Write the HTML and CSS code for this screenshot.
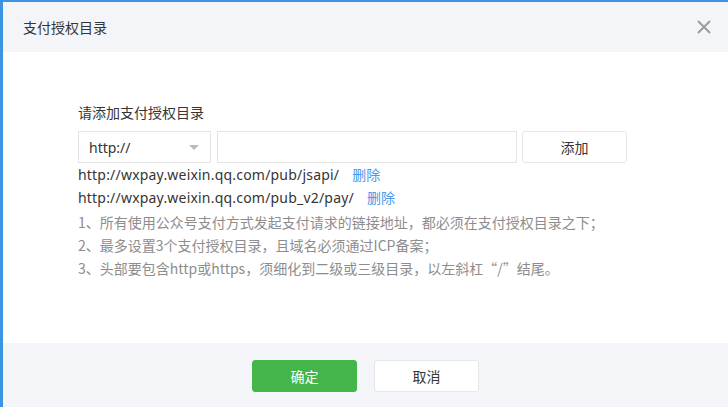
FILE: index.html
```html
<!DOCTYPE html>
<html lang="zh-CN">
  <head>
    <meta charset="UTF-8" />
    <title>支付授权目录</title>
    <link rel="stylesheet" href="styles.css">
  </head>
  <body>
    <div class="dialog">
      <div class="dialog-hd">
        <h3 class="dialog-title">支付授权目录</h3>
        <a class="dialog-close" href="javascript:;">
          <svg width="14" height="14" viewBox="0 0 14 14">
            <path d="M1 1L13 13M13 1L1 13" stroke="#999" stroke-width="1.8" fill="none" />
          </svg>
        </a>
      </div>

      <div class="dialog-bd">
        <p class="form-label">请添加支付授权目录</p>
        <div class="form-row">
          <div class="select">
            <span>http://</span>
            <i class="arrow"></i>
          </div>
          <input class="form-input" type="text" />
          <button class="btn btn-default btn-add">添加</button>
        </div>

        <ul class="dir-list">
          <li>http://wxpay.weixin.qq.com/pub/jsapi/<a class="link" href="javascript:;">删除</a></li>
          <li>http://wxpay.weixin.qq.com/pub_v2/pay/<a class="link" href="javascript:;">删除</a></li>
        </ul>

        <ul class="tips">
          <li>1、所有使用公众号支付方式发起支付请求的链接地址，都必须在支付授权目录之下；</li>
          <li>2、最多设置3个支付授权目录，且域名必须通过ICP备案；</li>
          <li>3、头部要包含http或https，须细化到二级或三级目录，以左斜杠“/”结尾。</li>
        </ul>
      </div>

      <div class="dialog-ft">
        <button class="btn btn-primary">确定</button>
        <button class="btn btn-default">取消</button>
      </div>
    </div>
  </body>
</html>
```

FILE: styles.css
```css
body {
  margin: 0;
  padding: 0;
  background: #fff;
  font-family: "Noto Sans", "Noto Sans CJK SC", sans-serif;
  font-size: 14px;
  color: #353535;
}

.dialog {
  width: 728px;
  height: 407px;
  box-sizing: border-box;
  border-top: 2px solid #3c95e2;
  border-left: 3px solid #3c95e2;
  display: flex;
  flex-direction: column;
}

.dialog-hd {
  height: 50px;
  flex-shrink: 0;
  background-color: #f4f5f9;
  display: flex;
  align-items: center;
  justify-content: space-between;
  padding: 0 17px 0 20px;
}

.dialog-title {
  margin: 0;
  font-size: 14px;
  font-weight: normal;
  color: #353535;
}

.dialog-close {
  display: flex;
  width: 14px;
  height: 14px;
}

.dialog-bd {
  flex: 1;
  padding: 51px 0 0 75px;
}

.form-label {
  margin: 0 0 8px;
  line-height: 20px;
}

.form-row {
  display: flex;
  height: 32px;
}

.select {
  width: 133px;
  box-sizing: border-box;
  border: 1px solid #e4e4e4;
  display: flex;
  align-items: center;
  justify-content: space-between;
  padding: 0 10px 0 10px;
  color: #353535;
}

.arrow {
  width: 0;
  height: 0;
  border-left: 5px solid transparent;
  border-right: 5px solid transparent;
  border-top: 5px solid #bbb;
  margin-right: 1px;
}

.form-input {
  width: 300px;
  box-sizing: border-box;
  margin-left: 6px;
  border: 1px solid #e4e4e4;
  padding: 0 8px;
  outline: none;
}

.btn {
  width: 105px;
  height: 32px;
  border-radius: 3px;
  font-size: 14px;
  font-family: inherit;
  cursor: pointer;
}

.btn-default {
  background: #fff;
  border: 1px solid #e4e8eb;
  color: #353535;
}

.btn-add {
  margin-left: 5px;
}

.btn-primary {
  background: #44b549;
  border: 1px solid #44b549;
  color: #fff;
}

.dir-list,
.tips {
  list-style: none;
  margin: 0;
  padding: 0;
}

.dir-list li {
  line-height: 23px;
  color: #353535;
  letter-spacing: 0.2px;
}

.link {
  color: #459ae9;
  text-decoration: none;
  margin-left: 13px;
  letter-spacing: 0;
}

.tips {
  margin-top: 2px;
  font-family: "Noto Sans CJK SC", sans-serif;
}

.tips li {
  line-height: 23px;
  color: #8d8d8d;
}

.dialog-ft {
  height: 64px;
  flex-shrink: 0;
  background-color: #f4f5f9;
  display: flex;
  align-items: center;
  justify-content: center;
  gap: 17px;
  padding-top: 2px;
  box-sizing: border-box;
}
```
